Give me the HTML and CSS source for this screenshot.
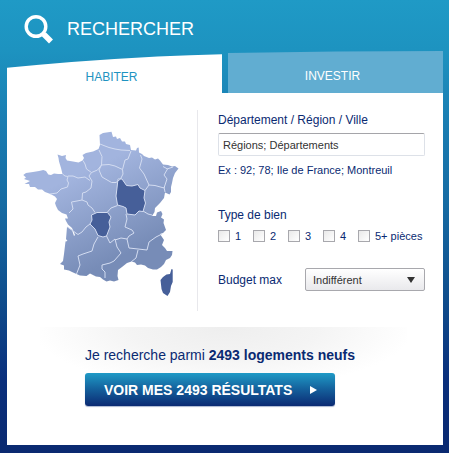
FILE: index.html
```html
<!DOCTYPE html>
<html lang="fr">
<head>
<meta charset="utf-8">
<title>Rechercher</title>
<link rel="stylesheet" href="styles.css">
</head>
<body>
<main class="search">
  <header class="head">
    <svg class="loupe" viewBox="0 0 30 30" aria-hidden="true">
      <circle cx="12" cy="11.500" r="9.800" fill="none" stroke="#fff" stroke-width="3.400"/>
      <path d="M18.500 18 L20.500 20" stroke="#fff" stroke-width="3"/>
      <path d="M19.800 19.300 L27 26.500" stroke="#fff" stroke-width="5.600"/>
    </svg>
    <h1 class="title">RECHERCHER</h1>
  </header>
  <nav class="tabs">
    <button type="button" class="tab tab-on">HABITER</button>
    <button type="button" class="tab tab-off">INVESTIR</button>
  </nav>
  <form class="panel">
    <div class="columns">
      <div class="map-side">
        <svg class="map" viewBox="20 128 162 172" role="img" aria-label="Carte des régions">
          <defs>
            <linearGradient id="land" gradientUnits="userSpaceOnUse" x1="75" y1="150" x2="125" y2="255">
              <stop offset="0.2" stop-color="#a2b4de"/>
              <stop offset="1" stop-color="#778cb7"/>
            </linearGradient>
          </defs>
          <path fill="url(#land)" d="M23.3 175 L26 173 L33 172 L39 171 L43.3 170 L46 171 L48.3 174.5 L51 175 L54 173.5 L58 174 L62.5 174 L61 168 L59 161.5 L58.5 158 L57.5 154.5 L62 156 L66 155 L65.5 158 L67 160.5 L73 161.5 L78.5 162.5 L82.5 160.5 L84 158 L82.5 155 L86 153 L93 151.5 L98.5 149 L100 145 L99.5 135 L103 133 L111.5 131.7 L113 137 L116 136.5 L117 139 L120 138 L122 141.5 L125 141.5 L126 144 L130 145 L131 150 L136 150.5 L137 148 L138.7 147.5 L139 152.5 L142 154 L144 156 L149 158 L152 157.5 L155 159.5 L158 158.5 L160 160.5 L163 164.5 L168 165 L172 166.5 L175 166 L178.5 168.5 L175 173 L173 178 L172 183 L171 187 L171 192 L169.5 194.5 L165 192.5 L164 198 L160 203 L155 208 L154.5 212 L152 216 L156 216 L157 212.5 L161 211 L162.5 214 L161 217.5 L164 219.5 L163.5 223 L166 230 L163 233 L160 234 L164 240 L162 245 L165 248 L167 251 L172.5 251 L172 255 L170 258 L166 260 L164 264 L161 267 L157 269.5 L153 269.5 L148 268 L145 265.5 L141 264.5 L137 265 L135 262.5 L131.5 261.5 L127 263 L122 267 L118 270 L117.5 276 L118.5 280 L114 281.5 L110 280.5 L106.5 281.5 L103 279.5 L100 277 L96 276.5 L90 273.5 L86.5 276 L80 275.5 L76.5 274 L72 272 L69 270.5 L64 269.5 L64 265.5 L60 264 L63 261 L64 254 L65.5 241.5 L67.5 241 L66 239 L67 227 L72 230 L74 236 L75 235 L72 228 L68 224.5 L66 221 L65 218.5 L68 218.5 L66.5 214.5 L62 213 L58 210 L56 206 L55 203 L57 199 L55 196.5 L50.5 194 L45 192 L42 189.5 L38 189.5 L35 187 L30 187 L29 184 L24.5 184 L30 181 L24 179 L26 177.5 Z"/>
          <g class="dark">
            <path d="M118 179 L122 179 L126.500 185.500 L132 186 L138 184.500 L140 188 L145 190.500 L144 198 L145.500 203 L143 211.500 L139 211 L135 215 L127 214 L126 208 L123 206.500 L117.500 205 L116 196 L117 188 Z"/>
            <path d="M91.500 215 L97 212.500 L107.500 212.500 L111 217 L109 222 L110 227 L106.500 236 L103 237 L98 235.500 L95 229 L90 224 L92 220 Z"/>
            <path d="M171.500 269 L172.700 269.500 L172.700 282 L171 286 L170 292 L167.500 296 L163 293 L161.500 289 L160.500 280 L163 277 L166.500 274.500 L170 274 Z"/>
          </g>
          <g class="borders">
            <path d="M62.5 174 L65 176 L68 176.500 L67 180 L68.500 183 L67.500 187 L61 189 L57 193 L50 194"/>
            <path d="M68 176 L73 176 L78 178 L85 177 L90 180.500"/>
            <path d="M83 160.500 L85 164 L86.500 169 L91.500 172.500 L89 176 L92 181 L91 188 L86 192 L82.500 193 L82 200 L87 202 L88 205 L92 208 L95 212.500"/>
            <path d="M99 150 L102 156.500 L101.500 165 L97.500 170 L91.500 172.500"/>
            <path d="M100 144 L105 146 L109 147.500 L115 149 L121 150 L130 150.500"/>
            <path d="M101.500 165 L109 164.500 L115 166 L122.500 169.500"/>
            <path d="M131 151 L128 159 L125 160 L122.500 169.500 L123 174 L120.500 179 L116 182.500 L111.500 182.500 L102 177 L99 170 L101.500 165"/>
            <path d="M140.500 155 L142 159 L139.500 168 L144 174 L149 185 L145 190.500"/>
            <path d="M149 185 L155 185.500 L164 188 L167 179 L164 175 L167.500 169 L163 166.500 M167 169 L173 167"/>
            <path d="M164 187 L165 192"/>
            <path d="M82 200 L77 201 L71.500 202 L73 209 L69 213"/>
            <path d="M118 179 L122 179 L126.500 185.500 L132 186 L138 184.500 L140 188 L145 190.500 L144 198 L145.500 203 L143 211.500 L139 211 L135 215 L127 214 L126 208 L123 206.500 L117.500 205 L116 196 L117 188 Z"/>
            <path d="M91.500 215 L97 212.500 L107.500 212.500 L111 217 L109 222 L110 227 L106.500 236 L103 237 L98 235.500 L95 229 L90 224 L92 220 Z"/>
            <path d="M107.500 212 L111 208 L117.500 205.500 M143 211 L148 214 L152 215"/>
            <path d="M67.500 227 L78 234.500 L82 232 L86 227 L90 224"/>
            <path d="M98 237 L94 244 L92 251 L83 254 L78 256 L80 265 L76.500 274"/>
            <path d="M105 278 L105 272 L102 269 L102 265 L110 263 L114 261 L121 253 L117 247 L115 239 L110 243 L106.500 236"/>
            <path d="M126 214 L127 219 L125 227 L132 230 L134 233 L129 236 L127 239 L121 238 L115 240"/>
            <path d="M127 239 L129 248 L138 249 L147 250 L149 242 L156 237 L162 234 M138 250 L136 258 L131 262"/>
          </g>
        </svg>
      </div>
      <div class="fields">
        <label class="label" for="place">Département / Région / Ville</label>
        <input class="place" id="place" type="text" value="Régions; Départements">
        <p class="hint">Ex : 92; 78; Ile de France; Montreuil</p>
        <fieldset class="rooms">
          <legend class="label">Type de bien</legend>
          <div class="choices">
            <label class="choice"><input type="checkbox">1</label>
            <label class="choice"><input type="checkbox">2</label>
            <label class="choice"><input type="checkbox">3</label>
            <label class="choice"><input type="checkbox">4</label>
            <label class="choice"><input type="checkbox">5+ pièces</label>
          </div>
        </fieldset>
        <div class="budget">
          <label class="label" for="budget">Budget max</label>
          <span class="pick"><select id="budget"><option>Indifférent</option></select></span>
        </div>
      </div>
    </div>
    <div class="result">
      <p class="count">Je recherche parmi <strong>2493 logements neufs</strong></p>
      <button type="submit" class="go">VOIR MES 2493 RÉSULTATS
        <svg class="arrow" viewBox="0 0 7 8" aria-hidden="true"><path d="M0 0 L7 4 L0 8 Z" fill="#fff"/></svg>
      </button>
    </div>
  </form>
</main>
</body>
</html>
```
FILE: styles.css
```css
* { box-sizing: border-box; }

body {
  margin: 0;
  font-family: "Liberation Sans", Arial, sans-serif;
  font-size: 12px;
  color: #0a2a72;
}

button, input, select { font-family: inherit; }

p, h1, fieldset, legend { margin: 0; padding: 0; border: 0; }

.search {
  display: flex;
  flex-direction: column;
  min-height: 100vh;
  padding: 0 6px 8px 7px;
  background: linear-gradient(#1f9ac6, #1d93c0 11%, #1a7db2 27%, #166ba3 45%, #0f4d8c 66%, #0a2f7c 84%, #0a2970);
}

.head {
  display: flex;
  align-items: center;
  gap: 13px;
  height: 51px;
  padding: 8px 17px 0;
}

.loupe { width: 30px; height: 30px; }

.title {
  font-size: 18px;
  font-weight: normal;
  color: #fff;
}

.tabs {
  display: grid;
  grid-template-columns: 1fr 1fr;
  gap: 6px;
  height: 42px;
}

.tab {
  border: 0;
  padding: 8px 6px 0 0;
  font-size: 12px;
}

.tab-on {
  padding-top: 10px;
  background: #fff;
  color: #1f93c1;
  clip-path: polygon(0 40%, 15% 33%, 30% 26%, 50% 19%, 70% 13%, 85% 10%, 100% 8%, 100% 100%, 0 100%);
}

.tab-off {
  background: #61add1;
  color: #fff;
  clip-path: polygon(0 5%, 50% 1%, 100% 0, 100% 100%, 0 100%);
}

.panel {
  flex: 1;
  display: flex;
  flex-direction: column;
  background: #fff;
}

.columns {
  display: grid;
  grid-template-columns: 191px 1fr;
  padding-top: 17px;
}

.map-side {
  height: 201px;
  padding: 18px 0 0 13px;
  border-right: 1px solid #e8e8ec;
}

.map { display: block; width: 162px; height: 172px; }

.dark { fill: #465f99; }

.borders {
  fill: none;
  stroke: #d3dcf1;
  stroke-width: 1;
  stroke-linejoin: round;
}

.fields {
  display: flex;
  flex-direction: column;
  padding: 2px 18px 0 20px;
}

.label { font-size: 12px; line-height: 16px; }

.place {
  width: 100%;
  height: 23px;
  margin-top: 5px;
  padding: 0 4px;
  border: 1px solid #dde1e8;
  border-top-color: #a5a5a9;
  border-radius: 2px;
  font-size: 11px;
  color: #333;
}

.hint { margin-top: 6px; font-size: 11px; line-height: 16px; }

.rooms { margin-top: 29px; }

.choices {
  display: grid;
  grid-template-columns: repeat(4, 35px) 1fr;
  margin-top: 6px;
}

.choice {
  display: flex;
  align-items: center;
  gap: 5px;
  font-size: 11px;
  line-height: 14px;
  white-space: nowrap;
}

.choice input {
  appearance: none;
  flex: none;
  width: 12px;
  height: 12px;
  margin: 0;
  border: 1px solid #a8a8ad;
  background: linear-gradient(135deg, #e9e9e9, #fff);
}

.budget {
  display: flex;
  align-items: center;
  justify-content: space-between;
  margin-top: 25px;
}

.pick { position: relative; width: 120px; }

.pick select {
  appearance: none;
  display: block;
  width: 100%;
  height: 23px;
  padding: 0 7px;
  border: 1px solid #a8a8ad;
  border-radius: 2px;
  background: linear-gradient(#fff, #e9e9ec);
  font-size: 11px;
  color: #333;
}

.pick::after {
  content: "";
  position: absolute;
  top: 9px;
  right: 10px;
  border: 4px solid transparent;
  border-top: 6px solid #333;
  border-bottom: 0;
  pointer-events: none;
}

.result {
  display: flex;
  flex-direction: column;
  align-items: flex-start;
  gap: 9px;
  margin: 16px 36px 0 33px;
  padding: 20px 0 0 45px;
  background: radial-gradient(ellipse 52% 80% at 50% 0, #eee, #f4f4f4 50%, #fff);
}

.count { font-size: 14px; line-height: 17px; }

.go {
  display: flex;
  align-items: center;
  gap: 18px;
  height: 33px;
  padding: 0 18px 0 19px;
  border: 0;
  border-radius: 3px;
  background: linear-gradient(#1f9ac6, #145f9b 50%, #0b2a73);
  box-shadow: 0 1px 1px #a9b6d0;
  font-size: 14px;
  font-weight: bold;
  color: #fff;
  white-space: nowrap;
}

.arrow { width: 7px; height: 8px; }
```
